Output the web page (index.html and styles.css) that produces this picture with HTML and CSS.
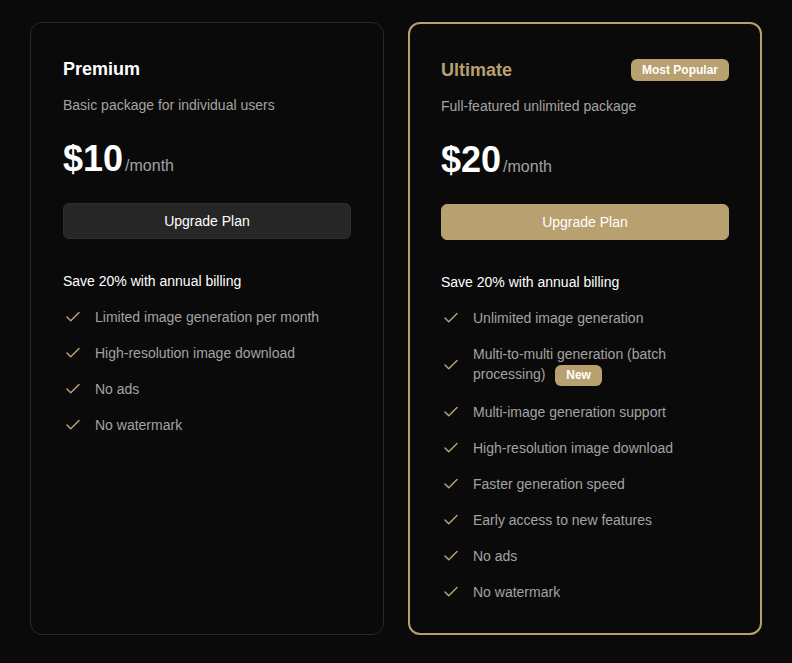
FILE: index.html
```html
<!DOCTYPE html>
<html lang="en">

<head>
    <meta charset="UTF-8">
    <meta name="viewport" content="width=device-width, initial-scale=1.0">
    <title>Pricing</title>
    <link rel="stylesheet" href="styles.css">
</head>

<body>

    <div class="plans">
        <div class="plan">
            <div class="plan-head">
                <h2 class="plan-name">Premium</h2>
            </div>
            <p class="plan-desc">Basic package for individual users</p>
            <div class="price"><span class="amount">$10</span><span class="period">/month</span></div>
            <button class="upgrade">Upgrade Plan</button>
            <p class="save">Save 20% with annual billing</p>
            <ul class="features">
                <li><svg class="check" viewBox="0 0 24 24"><polyline points="20 6 9 17 4 12"/></svg><span>Limited image generation per month</span></li>
                <li><svg class="check" viewBox="0 0 24 24"><polyline points="20 6 9 17 4 12"/></svg><span>High-resolution image download</span></li>
                <li><svg class="check" viewBox="0 0 24 24"><polyline points="20 6 9 17 4 12"/></svg><span>No ads</span></li>
                <li><svg class="check" viewBox="0 0 24 24"><polyline points="20 6 9 17 4 12"/></svg><span>No watermark</span></li>
            </ul>
        </div>

        <div class="plan featured">
            <div class="plan-head">
                <h2 class="plan-name">Ultimate</h2>
                <span class="badge">Most Popular</span>
            </div>
            <p class="plan-desc">Full-featured unlimited package</p>
            <div class="price"><span class="amount">$20</span><span class="period">/month</span></div>
            <button class="upgrade">Upgrade Plan</button>
            <p class="save">Save 20% with annual billing</p>
            <ul class="features">
                <li><svg class="check" viewBox="0 0 24 24"><polyline points="20 6 9 17 4 12"/></svg><span>Unlimited image generation</span></li>
                <li><svg class="check" viewBox="0 0 24 24"><polyline points="20 6 9 17 4 12"/></svg><span>Multi-to-multi generation (batch processing) <span class="tag">New</span></span></li>
                <li><svg class="check" viewBox="0 0 24 24"><polyline points="20 6 9 17 4 12"/></svg><span>Multi-image generation support</span></li>
                <li><svg class="check" viewBox="0 0 24 24"><polyline points="20 6 9 17 4 12"/></svg><span>High-resolution image download</span></li>
                <li><svg class="check" viewBox="0 0 24 24"><polyline points="20 6 9 17 4 12"/></svg><span>Faster generation speed</span></li>
                <li><svg class="check" viewBox="0 0 24 24"><polyline points="20 6 9 17 4 12"/></svg><span>Early access to new features</span></li>
                <li><svg class="check" viewBox="0 0 24 24"><polyline points="20 6 9 17 4 12"/></svg><span>No ads</span></li>
                <li><svg class="check" viewBox="0 0 24 24"><polyline points="20 6 9 17 4 12"/></svg><span>No watermark</span></li>
            </ul>
        </div>
    </div>

</body>
</html>
```

FILE: styles.css
```css
body {
    font-family: 'Liberation Sans', Arial, sans-serif;
    background-color: #0a0a0a;
    color: #ffffff;
    margin: 0;
    padding: 22px 30px 0 30px;
}

.plans {
    display: grid;
    grid-template-columns: 1fr 1fr;
    gap: 24px;
}

.plan {
    border: 1px solid #2a2a2a;
    border-radius: 12px;
    padding: 32px;
    background-color: #0a0a0a;
}

.plan.featured {
    border: 2px solid #b9a070;
    padding: 32px 31px 31px 31px;
}

.plan-head {
    display: flex;
    justify-content: space-between;
    align-items: center;
    height: 28px;
}

.plan-name {
    margin: 0;
    font-size: 18px;
    line-height: 28px;
    font-weight: bold;
    color: #ffffff;
}

.featured .plan-name {
    color: #b9a070;
}

.badge {
    background-color: #b9a070;
    color: #ffffff;
    font-size: 12px;
    font-weight: bold;
    line-height: 22px;
    padding: 0 11px;
    border-radius: 6px;
}

.plan-desc {
    margin: 12px 0 0;
    font-size: 14px;
    line-height: 20px;
    color: #a3a3a3;
}

.price {
    margin-top: 24px;
    display: flex;
    align-items: baseline;
}

.amount {
    font-size: 36px;
    line-height: 40px;
    font-weight: bold;
}

.period {
    font-size: 16px;
    color: #a3a3a3;
    margin-left: 2px;
}

.upgrade {
    display: block;
    width: 100%;
    height: 36px;
    margin-top: 24px;
    background-color: #262626;
    border: 1px solid #2e2e2e;
    border-radius: 6px;
    color: #ffffff;
    font-family: inherit;
    font-size: 14px;
    cursor: pointer;
}

.featured .upgrade {
    background-color: #b9a070;
    border-color: #b9a070;
}

.save {
    margin: 32px 0 0;
    font-size: 14px;
    line-height: 20px;
    color: #ffffff;
}

.features {
    list-style: none;
    margin: 16px 0 0;
    padding: 0;
    display: flex;
    flex-direction: column;
    gap: 16px;
}

.features li {
    display: flex;
    align-items: center;
    font-size: 14px;
    line-height: 20px;
    color: #a3a3a3;
}

.check {
    width: 18px;
    height: 18px;
    flex-shrink: 0;
    margin: 0 13px 0 1px;
    fill: none;
    stroke: #b9a070;
    stroke-width: 2;
    stroke-linecap: round;
    stroke-linejoin: round;
}

.tag {
    display: inline-block;
    vertical-align: middle;
    background-color: #b9a070;
    color: #ffffff;
    font-size: 12px;
    font-weight: bold;
    line-height: 21px;
    padding: 0 11px;
    border-radius: 6px;
    margin-left: 6px;
}
```
